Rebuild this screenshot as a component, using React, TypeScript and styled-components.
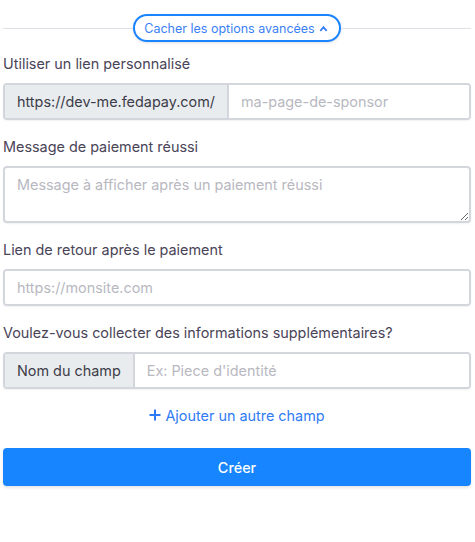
import styled, { createGlobalStyle } from "styled-components";

const GlobalStyle = createGlobalStyle`
    *, *::before, *::after {
        box-sizing: border-box;
    }

    body {
        margin: 0;
        background: #ffffff;
        font-family: Inter, "Noto Sans", sans-serif;
    }
`;

const Page = styled.div`
    padding: 14px 4px 40px 3px;
    display: flex;
    flex-direction: column;
`;

const Divider = styled.div`
    display: flex;
    align-items: center;

    &::before,
    &::after {
        content: "";
        flex: 1;
        height: 1px;
        background: #dfe1e6;
    }
`;

const ToggleButton = styled.button`
    display: flex;
    align-items: center;
    gap: 4px;
    height: 28px;
    padding: 0 11px 0 9px;
    border: 2px solid #1a84ff;
    border-radius: 14px;
    background: #ffffff;
    color: #3a7ff5;
    font-family: Inter, "Noto Sans", sans-serif;
    font-size: 12.5px;
    box-shadow: 0 1px 3px rgba(0, 0, 0, 0.12);
    cursor: pointer;
`;

const Field = styled.div<{ $top?: number }>`
    display: flex;
    flex-direction: column;
    margin-top: ${(p) => p.$top ?? 18}px;
`;

const Label = styled.label`
    font-size: 14.4px;
    color: #4a4458;
    margin-bottom: 10px;
    line-height: 18px;
`;

const Group = styled.div`
    display: flex;
    height: 37px;
    border: 2px solid #d3d6dc;
    border-radius: 4px;
    overflow: hidden;
    box-shadow: 0 1px 2px rgba(0, 0, 0, 0.06);
`;

const Addon = styled.span`
    display: flex;
    align-items: center;
    padding: 0 12px;
    background: #e9ecef;
    border-right: 2px solid #d3d6dc;
    color: #3c3c48;
    font-size: 14.4px;
    white-space: nowrap;
`;

const Input = styled.input`
    flex: 1;
    min-width: 0;
    border: none;
    outline: none;
    padding: 0 12px;
    font-family: Inter, "Noto Sans", sans-serif;
    font-size: 14.4px;
    color: #333;
    background: #ffffff;

    &::placeholder {
        color: #b8b8bf;
    }
`;

const TextArea = styled.textarea`
    display: block;
    height: 57px;
    border: 2px solid #d3d6dc;
    border-radius: 4px;
    padding: 8px 12px;
    font-family: Inter, "Noto Sans", sans-serif;
    font-size: 14.4px;
    resize: vertical;
    outline: none;
    box-shadow: 0 1px 2px rgba(0, 0, 0, 0.06);

    &::placeholder {
        color: #b8b8bf;
    }
`;

const AddLink = styled.button`
    align-self: center;
    display: flex;
    align-items: center;
    gap: 4px;
    height: 18px;
    margin-top: 17px;
    padding: 0;
    border: none;
    background: none;
    color: #2f7bf5;
    font-family: Inter, "Noto Sans", sans-serif;
    font-size: 14.4px;
    cursor: pointer;
`;

const SubmitButton = styled.button`
    margin-top: 24px;
    height: 38px;
    border: none;
    border-radius: 4px;
    background: #1685ff;
    color: #ffffff;
    font-family: Inter, "Noto Sans", sans-serif;
    font-size: 14.4px;
    font-weight: 500;
    box-shadow: 0 2px 3px rgba(0, 0, 0, 0.1);
    cursor: pointer;
`;

export default function App() {
    return (
        <Page>
            <GlobalStyle />
            <Divider>
                <ToggleButton>
                    Cacher les options avancées
                    <svg width="9" height="9" viewBox="0 0 10 10">
                        <path d="M2 7 L5 3.5 L8 7" fill="none" stroke="#3a7ff5" strokeWidth="2" strokeLinecap="round" />
                    </svg>
                </ToggleButton>
            </Divider>

            <Field $top={13}>
                <Label>Utiliser un lien personnalisé</Label>
                <Group>
                    <Addon>https://dev-me.fedapay.com/</Addon>
                    <Input placeholder="ma-page-de-sponsor" />
                </Group>
            </Field>

            <Field>
                <Label>Message de paiement réussi</Label>
                <TextArea placeholder="Message à afficher après un paiement réussi" />
            </Field>

            <Field>
                <Label>Lien de retour après le paiement</Label>
                <Group>
                    <Input placeholder="https://monsite.com" />
                </Group>
            </Field>

            <Field>
                <Label>Voulez-vous collecter des informations supplémentaires?</Label>
                <Group>
                    <Addon>Nom du champ</Addon>
                    <Input placeholder="Ex: Piece d'identité" />
                </Group>
            </Field>

            <AddLink>
                <svg width="12" height="12" viewBox="0 0 12 12">
                    <path d="M6 0.5 V11.5 M0.5 6 H11.5" stroke="#2f7bf5" strokeWidth="2" />
                </svg>
                Ajouter un autre champ
            </AddLink>

            <SubmitButton>Créer</SubmitButton>
        </Page>
    );
}
